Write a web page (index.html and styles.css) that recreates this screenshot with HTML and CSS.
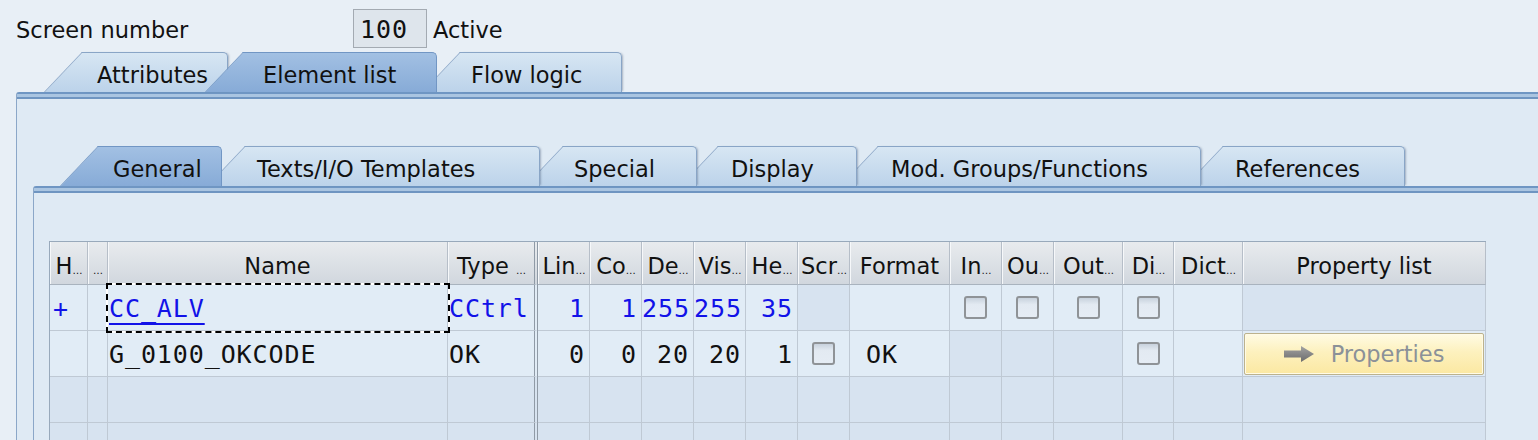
FILE: index.html
```html
<!DOCTYPE html>
<html>
<head>
<meta charset="utf-8">
<title>Screen 100 - Element list</title>
<link rel="stylesheet" href="styles.css">
</head>
<body>
<div class="top">
  <span class="lbl">Screen number</span>
  <span class="field">100</span>
  <span class="status">Active</span>
</div>
<div class="tabs outer-tabs">
  <div class="tab t-attr">Attributes</div>
  <div class="tab active t-elem">Element list</div>
  <div class="tab t-flow">Flow logic</div>
</div>
<div class="panel outer-panel">
  <div class="tabs inner-tabs">
    <div class="tab active t-gen">General</div>
    <div class="tab t-txt">Texts/I/O Templates</div>
    <div class="tab t-spc">Special</div>
    <div class="tab t-dsp">Display</div>
    <div class="tab t-mod">Mod. Groups/Functions</div>
    <div class="tab t-ref">References</div>
  </div>
  <div class="panel inner-panel">
    <div class="grid">
      <div class="hd">H<span class="ell">…</span></div>
      <div class="hd"><span class="ell">…</span></div>
      <div class="hd">Name</div>
      <div class="hd sep">Type <span class="ell">…</span></div>
      <div class="hd">Lin<span class="ell">…</span></div>
      <div class="hd">Co<span class="ell">…</span></div>
      <div class="hd">De<span class="ell">…</span></div>
      <div class="hd">Vis<span class="ell">…</span></div>
      <div class="hd">He<span class="ell">…</span></div>
      <div class="hd">Scr<span class="ell">…</span></div>
      <div class="hd">Format</div>
      <div class="hd">In<span class="ell">…</span></div>
      <div class="hd">Ou<span class="ell">…</span></div>
      <div class="hd">Out<span class="ell">…</span></div>
      <div class="hd">Di<span class="ell">…</span></div>
      <div class="hd">Dict<span class="ell">…</span></div>
      <div class="hd">Property list</div>

      <div class="c lt blue pad3">+</div>
      <div class="c lt"></div>
      <div class="c lt blue pad1 focus"><span class="link">CC_ALV</span></div>
      <div class="c lt blue pad1 sep">CCtrl</div>
      <div class="c lt blue num">1</div>
      <div class="c lt blue num">1</div>
      <div class="c lt blue num">255</div>
      <div class="c lt blue num">255</div>
      <div class="c lt blue num">35</div>
      <div class="c"></div>
      <div class="c lt"></div>
      <div class="c lt cbx"><span class="cb"></span></div>
      <div class="c lt cbx"><span class="cb"></span></div>
      <div class="c lt cbx"><span class="cb"></span></div>
      <div class="c lt cbx"><span class="cb"></span></div>
      <div class="c lt"></div>
      <div class="c"></div>

      <div class="c lt"></div>
      <div class="c lt"></div>
      <div class="c lt pad1">G_0100_OKCODE</div>
      <div class="c lt pad1 sep">OK</div>
      <div class="c lt num">0</div>
      <div class="c lt num">0</div>
      <div class="c lt num">20</div>
      <div class="c lt num">20</div>
      <div class="c lt num">1</div>
      <div class="c lt cbx"><span class="cb"></span></div>
      <div class="c lt fmt">OK</div>
      <div class="c"></div>
      <div class="c"></div>
      <div class="c"></div>
      <div class="c lt cbx"><span class="cb"></span></div>
      <div class="c lt"></div>
      <div class="c lt pcell">
        <div class="btn">
          <svg class="arrow" width="30" height="16" viewBox="0 0 30 16">
            <defs>
              <linearGradient id="ag" x1="0" y1="0" x2="0" y2="1">
                <stop offset="0" stop-color="#a3a3a3"/>
                <stop offset="1" stop-color="#6c6c6c"/>
              </linearGradient>
            </defs>
            <path d="M0 4.5 H17 V0 L30 8 L17 16 V11.5 H0 Z" fill="url(#ag)"/>
          </svg>
          <span>Properties</span>
        </div>
      </div>

      <div class="c"></div><div class="c"></div><div class="c"></div><div class="c sep"></div>
      <div class="c"></div><div class="c"></div><div class="c"></div><div class="c"></div>
      <div class="c"></div><div class="c"></div><div class="c"></div><div class="c"></div>
      <div class="c"></div><div class="c"></div><div class="c"></div><div class="c"></div>
      <div class="c"></div>

      <div class="c"></div><div class="c"></div><div class="c"></div><div class="c sep"></div>
      <div class="c"></div><div class="c"></div><div class="c"></div><div class="c"></div>
      <div class="c"></div><div class="c"></div><div class="c"></div><div class="c"></div>
      <div class="c"></div><div class="c"></div><div class="c"></div><div class="c"></div>
      <div class="c"></div>
    </div>
  </div>
</div>
</body>
</html>
```

FILE: styles.css
```css
html, body {
  margin: 0;
  padding: 0;
}
body {
  background: #e8eff6;
  font-family: "DejaVu Sans", "Liberation Sans", sans-serif;
  font-size: 22.5px;
  color: #111;
  width: 1538px;
  height: 440px;
  overflow: hidden;
}

/* top line */
.top {
  display: flex;
  align-items: flex-start;
  height: 52px;
  box-sizing: border-box;
  padding: 9px 0 0 16px;
}
.lbl {
  width: 337px;
  padding-top: 2px;
  line-height: 39px;
}
.field {
  box-sizing: border-box;
  width: 74px;
  height: 39px;
  border: 1px solid #a3aab2;
  background: #dee5ec;
  font-family: "DejaVu Sans Mono", "Liberation Mono", monospace;
  font-size: 25px;
  letter-spacing: 0.9px;
  line-height: 37px;
  padding: 1px 0 0 6px;
}
.status {
  margin-left: 6px;
  padding-top: 2px;
  line-height: 39px;
}

/* tabs */
.tabs {
  display: flex;
  height: 40px;
}
.outer-tabs { padding-left: 82px; }
.inner-tabs { padding-left: 65px; }

.tab {
  position: relative;
  box-sizing: border-box;
  height: 40px;
  padding: 5px 0 0 12px;
  line-height: 34px;
  white-space: nowrap;
  border-top: 1px solid #89a5c6;
  border-right: 1px solid #89a5c6;
  border-top-right-radius: 5px;
  background: linear-gradient(#d7e6f3, #bcd3ea);
  box-shadow: 2px 0 2px -1px rgba(50, 70, 100, 0.35);
}
.tab::before {
  content: "";
  position: absolute;
  top: -1px;
  bottom: 0;
  left: -38px;
  width: 52px;
  border-top: 1px solid #89a5c6;
  border-left: 1px solid #89a5c6;
  background: inherit;
  transform: skewX(-43.5deg);
  transform-origin: 0 100%;
  z-index: -1;
}
.tab:nth-child(1) { z-index: 6; }
.tab:nth-child(2) { z-index: 5; }
.tab:nth-child(3) { z-index: 4; }
.tab:nth-child(4) { z-index: 3; }
.tab:nth-child(5) { z-index: 2; }
.tab:nth-child(6) { z-index: 1; }
.tab.active {
  z-index: 10;
  background: linear-gradient(#a2c0e3, #87abd7);
  border-color: #7196c4;
  box-shadow: none;
}
.tab.active::before { border-color: #7196c4; }

.t-attr { width: 146px; padding-left: 15px; }
.t-elem { width: 194px; margin-left: 15px; padding-left: 20px; }
.t-flow { width: 162px; margin-left: 23px; padding-left: 11px; }

.t-gen { width: 124px; padding-left: 15px; }
.t-txt { width: 295px; margin-left: 23px; }
.t-spc { width: 134px; margin-left: 23px; padding-left: 11px; }
.t-dsp { width: 139px; margin-left: 21px; padding-left: 13px; }
.t-mod { width: 323px; margin-left: 21px; padding-left: 13px; }
.t-ref { width: 182px; margin-left: 22px; }

/* panels */
.panel {
  border-left: 1px solid #8ba7c8;
  border-top-left-radius: 3px;
  background: linear-gradient(#6f96c3 0, #6f96c3 2px, #aac5e1 2px, #aac5e1 5px, #6f95c1 5px, #6f95c1 7px, #dfeaf4 7px);
}
.outer-panel {
  margin-left: 16px;
  padding: 54px 0 0 16px;
  min-height: 400px;
}
.inner-panel {
  padding: 55px 0 0 15px;
  min-height: 300px;
}

/* table */
.grid {
  display: grid;
  grid-template-columns: 38px 20px 340px 90px 52px 52px 52px 52px 52px 52px 100px 52px 52px 69px 51px 69px 243px;
  width: 1437px;
  box-sizing: border-box;
  border-left: 1px solid #98a9bb;
  border-top: 1px solid #98a9bb;
}
.hd {
  height: 43px;
  box-sizing: border-box;
  border-right: 1px solid #b6bec8;
  border-bottom: 1px solid #a9b3be;
  background: linear-gradient(#e8ebee, #d1d7de);
  box-shadow: inset 1px 0 #f6f8fa;
  text-align: center;
  padding-top: 7px;
  line-height: 35px;
  overflow: hidden;
  white-space: nowrap;
}
.ell {
  font-size: 10px;
  letter-spacing: -1px;
}
.c {
  height: 46px;
  box-sizing: border-box;
  border-right: 1px solid #bfc9d4;
  border-bottom: 1px solid #bfc9d4;
  background: #d7e3f0;
  font-family: "DejaVu Sans Mono", "Liberation Mono", monospace;
  font-size: 25px;
  letter-spacing: 0.9px;
  line-height: 41px;
  padding-top: 3px;
  white-space: nowrap;
}
.c.lt { background: #e1ecf6; }
.hd.sep, .c.sep { border-right: 4px double #8f9aa6; }
.blue { color: #1212e8; }
.pad1 { padding-left: 1px; }
.pad3 { padding-left: 3px; }
.num { text-align: right; padding-right: 4px; }
.fmt { padding-left: 16px; }
.link {
  text-decoration: underline;
  text-decoration-thickness: 2px;
  text-underline-offset: 6px;
}
.focus {
  position: relative;
  z-index: 1;
  outline: 2px dashed #000;
  box-shadow: 0 0 0 2px #fff;
}
.cbx {
  display: flex;
  align-items: center;
  justify-content: center;
  padding-top: 0;
}
.cb {
  display: block;
  width: 23px;
  height: 23px;
  box-sizing: border-box;
  border: 2px solid #8f9397;
  border-radius: 3px;
  background: linear-gradient(#c8d2dd, #e3eaf2 35%, #e5ecf4);
}
.pcell {
  padding: 2px 1px 0 1px;
}
.btn {
  box-sizing: border-box;
  width: 100%;
  height: 42px;
  border: 1px solid #bcb28d;
  border-radius: 2px;
  background: linear-gradient(#fffbe4, #fdf1be 45%, #fbe8a2);
  box-shadow: inset 0 0 0 1px #fffbe6;
  display: flex;
  align-items: center;
  justify-content: center;
  gap: 17px;
  color: #8b9198;
  font-family: "DejaVu Sans", "Liberation Sans", sans-serif;
  font-size: 22.5px;
  letter-spacing: 0;
  line-height: 40px;
}
.arrow { display: block; }
```
